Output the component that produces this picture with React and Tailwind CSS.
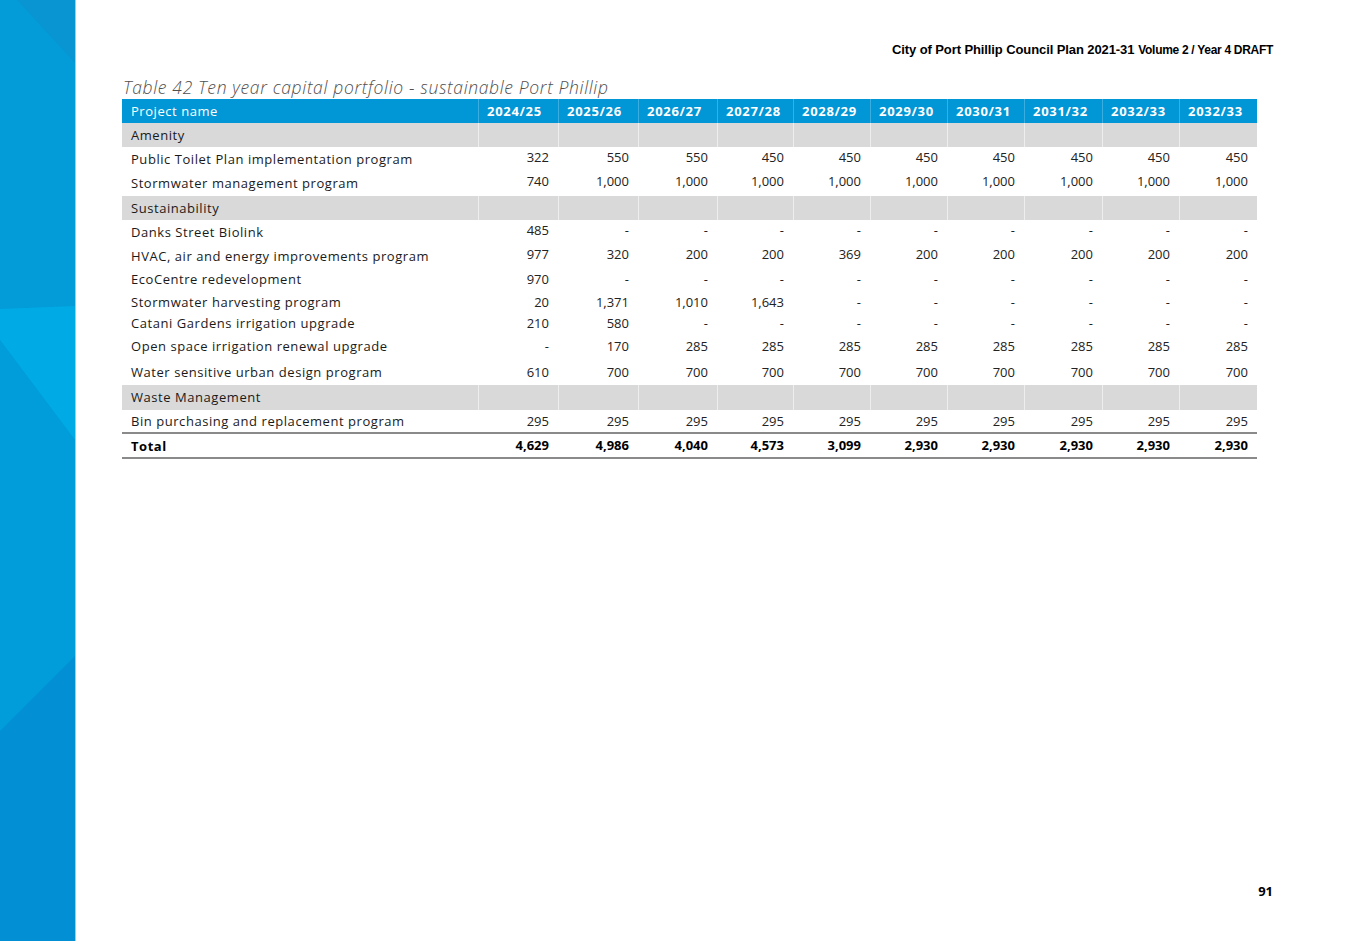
import React from "react";

const COLS = [80, 80, 79, 76, 77, 77, 77, 78, 77, 78];
const YEARS = ["2024/25", "2025/26", "2026/27", "2027/28", "2028/29", "2029/30", "2030/31", "2031/32", "2032/33", "2032/33"];
const D = "-";

const ROWS = [
  { type: "group", label: "Amenity", h: "h-[24px]" },
  { label: "Public Toilet Plan implementation program", h: "h-[24px]", up: true, v: ["322", "550", "550", "450", "450", "450", "450", "450", "450", "450"] },
  { label: "Stormwater management program", h: "h-[25px]", up: true, v: ["740", "1,000", "1,000", "1,000", "1,000", "1,000", "1,000", "1,000", "1,000", "1,000"] },
  { type: "group", label: "Sustainability", h: "h-[24px]" },
  { label: "Danks Street Biolink", h: "h-[24px]", up: true, v: ["485", D, D, D, D, D, D, D, D, D] },
  { label: "HVAC, air and energy improvements program", h: "h-[24px]", up: true, v: ["977", "320", "200", "200", "369", "200", "200", "200", "200", "200"] },
  { label: "EcoCentre redevelopment", h: "h-[23px]", v: ["970", D, D, D, D, D, D, D, D, D] },
  { label: "Stormwater harvesting program", h: "h-[23px]", v: ["20", "1,371", "1,010", "1,643", D, D, D, D, D, D] },
  { label: "Catani Gardens irrigation upgrade", h: "h-[19px]", v: ["210", "580", D, D, D, D, D, D, D, D] },
  { label: "Open space irrigation renewal upgrade", h: "h-[26px]", v: [D, "170", "285", "285", "285", "285", "285", "285", "285", "285"] },
  { label: "Water sensitive urban design program", h: "h-[26px]", v: ["610", "700", "700", "700", "700", "700", "700", "700", "700", "700"] },
  { type: "group", label: "Waste Management", h: "h-[25px]" },
  { label: "Bin purchasing and replacement program", h: "h-[24px]", v: ["295", "295", "295", "295", "295", "295", "295", "295", "295", "295"] },
];

const TOTAL = ["4,629", "4,986", "4,040", "4,573", "3,099", "2,930", "2,930", "2,930", "2,930", "2,930"];

function SideBand() {
  return (
    <div className="w-[76px] shrink-0 h-[941px] border-r border-[#8fd3f2]">
      <svg width="75" height="941" viewBox="0 0 75 941" preserveAspectRatio="none" className="block">
        <rect x="0" y="0" width="75" height="941" fill="#019dda" />
        <polygon points="17,0 75,0 75,63" fill="#0895d2" />
        <polygon points="0,0 17,0 75,63 75,306 0,309" fill="#049bd9" />
        <polygon points="0,309 75,306 75,440 0,340" fill="#00abe5" />
        <polygon points="0,340 75,440 75,656 0,731" fill="#019ddb" />
        <polygon points="0,731 75,656 75,941 0,941" fill="#028fd3" />
      </svg>
    </div>
  );
}

function App() {
  const font = { fontFamily: "'Open Sans', 'Noto Sans', sans-serif" };
  return (
    <div className="flex w-[1347px] h-[941px] bg-white overflow-hidden">
      <SideBand />
      <div className="flex-1 flex flex-col h-[941px]">
        <div className="flex justify-end items-baseline pt-[40px] pr-[74px] h-[60px] text-black font-bold" style={{ fontFamily: "'Liberation Sans', Arial, sans-serif" }}>
          <span className="text-[13px] tracking-[-0.1px]">City of Port Phillip Council Plan 2021-31</span>
          <span className="text-[12px] ml-[4px] tracking-[-0.3px]">Volume 2 / Year 4 DRAFT</span>
        </div>
        <div className="pl-[46px]" style={font}>
          <div className="h-[39px] flex items-end pb-[3px] pl-[1px] text-[17.5px] tracking-[0.65px] italic font-light text-[#505050] leading-none">
            Table 42 Ten year capital portfolio - sustainable Port Phillip
          </div>
          <div className="w-[1135px] text-[13px] leading-none">
            <div className="flex h-[24px] bg-[#0196d5] text-white">
              <div className="w-[356px] flex items-center pl-[9px] tracking-[0.55px]">Project name</div>
              {YEARS.map((y, i) => (
                <div key={i} style={{ width: COLS[i] }} className="flex items-center pl-[8px] font-bold tracking-[0.7px] border-l border-[#3aaee0]">
                  {y}
                </div>
              ))}
            </div>
            {ROWS.map((r, ri) =>
              r.type === "group" ? (
                <div key={ri} className={`flex ${r.h} bg-[#d9d9d9] text-[#1a1a1a]`}>
                  <div className="w-[356px] flex items-center pl-[9px] tracking-[0.55px]">{r.label}</div>
                  {COLS.map((w, i) => (
                    <div key={i} style={{ width: w }} className="border-l border-[#eeeeee]" />
                  ))}
                </div>
              ) : (
                <div key={ri} className={`flex ${r.h} text-[#1a1a1a] ${ri === ROWS.length - 1 ? "border-b-2 border-[#8a8a8a]" : ""}`}>
                  <div className="w-[356px] flex items-center pl-[9px] tracking-[0.55px]">{r.label}</div>
                  {r.v.map((v, i) => (
                    <div key={i} style={{ width: COLS[i] }} className={`flex items-center justify-end pr-[9px] text-[#222] ${r.up ? "pb-[4px]" : ""}`}>
                      {v}
                    </div>
                  ))}
                </div>
              )
            )}
            <div className="flex h-[25px] font-bold text-black border-b-2 border-[#8a8a8a]">
              <div className="w-[356px] flex items-center pl-[9px] pt-[2px] tracking-[0.55px]">Total</div>
              {TOTAL.map((v, i) => (
                <div key={i} style={{ width: COLS[i] }} className="flex items-center justify-end pr-[9px]">
                  {v}
                </div>
              ))}
            </div>
          </div>
        </div>
        <div className="flex-1" />
        <div className="flex justify-end pr-[74px] pb-[43px] text-[13px] font-bold text-black leading-none" style={font}>
          91
        </div>
      </div>
    </div>
  );
}

export default App;
